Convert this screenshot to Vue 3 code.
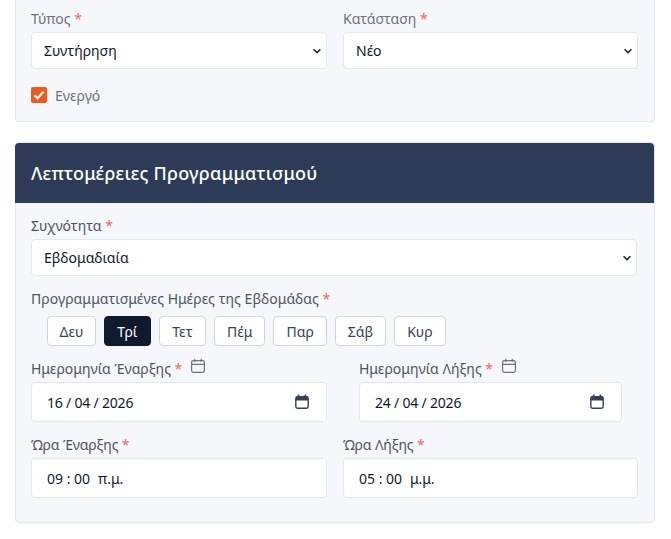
<template>
  <div class="page">
    <section class="card top-card">
      <div class="two-col">
        <div class="field">
          <label class="lbl">Τύπος <span class="req">*</span></label>
          <select class="ctl sel"><option>Συντήρηση</option></select>
        </div>
        <div class="field">
          <label class="lbl">Κατάσταση <span class="req">*</span></label>
          <select class="ctl sel"><option>Νέο</option></select>
        </div>
      </div>
      <label class="check">
        <span class="box">
          <svg width="16" height="16" viewBox="0 0 16 16"><path d="M3.4 8.2 6.6 11.2 12.4 4.8" fill="none" stroke="#fff" stroke-width="2.2" /></svg>
        </span>
        <span class="check-txt">Ενεργό</span>
      </label>
    </section>

    <section class="card plan-card">
      <h2 class="head">Λεπτομέρειες Προγραμματισμού</h2>
      <div class="body">
        <div class="field">
          <label class="lbl">Συχνότητα <span class="req">*</span></label>
          <select class="ctl sel"><option>Εβδομαδιαία</option></select>
        </div>

        <div class="lbl days-lbl">Προγραμματισμένες Ημέρες της Εβδομάδας <span class="req">*</span></div>
        <div class="days">
          <button
            v-for="d in days"
            :key="d"
            type="button"
            class="day"
            :class="{ on: d === 'Τρί' }"
          >{{ d }}</button>
        </div>

        <div class="date-row">
          <div v-for="f in dates" :key="f.label" class="field date-field">
            <label class="lbl">
              {{ f.label }} <span class="req">*</span>
              <svg class="cal-small" width="16" height="16" viewBox="0 0 16 16" fill="none" stroke="#6b7280" stroke-width="1.2">
                <rect x="1.6" y="2.6" width="12.8" height="11.8" rx="1.8" />
                <path d="M1.6 6.4h12.8M4.8 0.8v3.2M11.2 0.8v3.2" />
              </svg>
            </label>
            <div class="ctl tall">
              <span class="val date-val">{{ f.value }}</span>
              <svg width="16" height="16" viewBox="0 0 16 16" fill="none">
                <path d="M4.6 0.6v3M11.4 0.6v3" stroke="#374151" stroke-width="1.6" />
                <rect x="1.8" y="2.8" width="12.4" height="11.4" rx="1.6" stroke="#374151" stroke-width="1.4" />
                <path d="M2 3.4a1 1 0 0 1 1-1h10a1 1 0 0 1 1 1v3H2z" fill="#374151" />
              </svg>
            </div>
          </div>
        </div>

        <div class="two-col time-row">
          <div v-for="t in times" :key="t.label" class="field">
            <label class="lbl time-lbl">{{ t.label }} <span class="req">*</span></label>
            <div class="ctl tall"><span class="val">{{ t.hm }}<span class="ampm">{{ t.ap }}</span></span></div>
          </div>
        </div>
      </div>
    </section>
  </div>
</template>

<script setup>
const days = ['Δευ', 'Τρί', 'Τετ', 'Πέμ', 'Παρ', 'Σάβ', 'Κυρ']

const dates = [
  { label: 'Ημερομηνία Έναρξης', value: '16 / 04 / 2026' },
  { label: 'Ημερομηνία Λήξης', value: '24 / 04 / 2026' },
]

const times = [
  { label: 'Ώρα Έναρξης', hm: '09 : 00', ap: 'π.μ.' },
  { label: 'Ώρα Λήξης', hm: '05 : 00', ap: 'μ.μ.' },
]
</script>

<style>
html, body { margin: 0; background: #fff; overflow: hidden; }
</style>

<style scoped>
.page {
  width: 671px;
  height: 539px;
  padding: 0 16px 0 15px;
  box-sizing: border-box;
  font-family: "Noto Sans", "Liberation Sans", sans-serif;
  font-size: 14px;
  color: #111827;
}
.card {
  background: #f6f7fa;
  border: 1px solid #e2e8f0;
  border-radius: 4px;
  width: 640px;
  box-sizing: border-box;
}
.top-card {
  border-top: 0;
  border-radius: 0 0 4px 4px;
  height: 122px;
  padding: 9px 16px 0 15px;
}
.two-col {
  display: grid;
  grid-template-columns: 296px 295px;
  gap: 16px;
}
.field { display: flex; flex-direction: column; }
.lbl {
  display: block;
  line-height: 20px;
  margin-bottom: 3px;
  color: #6b7280;
  font-size: 14px;
}
.req { color: #f56565; }
.ctl {
  background: #fff;
  border: 1px solid #e2e8f0;
  border-radius: 4px;
  box-sizing: border-box;
  font-family: inherit;
  font-size: 14px;
  color: #111827;
}
.sel {
  height: 37px;
  width: 100%;
  padding: 0 28px 0 12px;
  outline: none;
  appearance: none;
  background-image: url("data:image/svg+xml,%3Csvg xmlns='http://www.w3.org/2000/svg' width='10' height='6' viewBox='0 0 10 6'%3E%3Cpath d='M1.6 1.2 5 4.6 8.4 1.2' fill='none' stroke='%231f2937' stroke-width='1.6'/%3E%3C/svg%3E");
  background-repeat: no-repeat;
  background-position: right 4px center;
}
.check {
  display: flex;
  align-items: center;
  gap: 8px;
  margin-top: 15px;
  line-height: 20px;
  color: #6b7280;
}
.check-txt { padding-top: 2px; }
.box {
  width: 16px;
  height: 16px;
  border-radius: 2px;
  background: #f05a22;
  display: flex;
}
.plan-card {
  margin-top: 20px;
  height: 381px;
}
.head {
  margin: 0 0 0 -1px;
  background: #2d3b58;
  color: #fff;
  height: 60px;
  padding: 0 16px;
  border-radius: 4px 4px 0 0;
  font-size: 18px;
  font-weight: 500;
  line-height: 60px;
  letter-spacing: 0.25px;
}
.body { padding: 13px 16px 0 15px; }
.body > .field { width: 606px; }
.days-lbl { margin-top: 13px; margin-bottom: 7px; letter-spacing: 0.03px; }
.body .lbl { color: #4b5563; }
.days {
  display: flex;
  gap: 8px;
  margin-left: 16px;
}
.day {
  height: 30px;
  min-width: 47px;
  padding: 0 12px;
  border: 1px solid #d1d5db;
  border-radius: 4px;
  background: #fff;
  color: #374151;
  font-family: inherit;
  font-size: 14px;
}
.day:first-child { padding: 0 11.5px; }
.day.on {
  background: #0f1a2e;
  border-color: #0f1a2e;
  color: #fff;
}
.date-row {
  display: flex;
  gap: 32px;
  margin-top: 12px;
}
.date-field { width: 296px; }
.date-field + .date-field { width: 263px; }
.cal-small { margin-left: 8px; vertical-align: 0; }
.tall {
  height: 40px;
  padding: 0 16px 0 15px;
  display: flex;
  align-items: center;
  justify-content: space-between;
}
.date-field .lbl { margin-bottom: 1px; line-height: 22px; height: 23px; }
.time-row { margin-top: 13px; }
.time-lbl { letter-spacing: -0.15px; }
.val { white-space: pre; }
.date-val { letter-spacing: -0.2px; }
.ampm { margin-left: 8px; }
</style>
